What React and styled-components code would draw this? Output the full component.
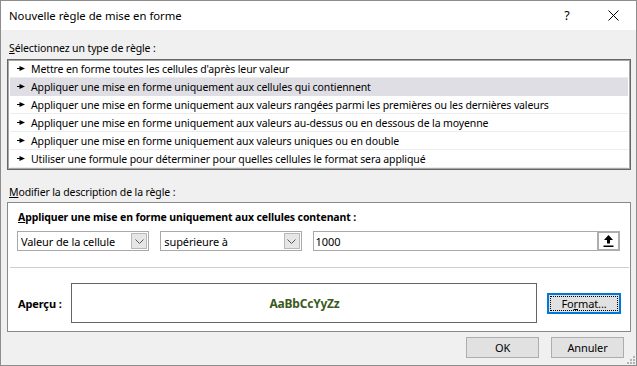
import React from "react";
import styled, { createGlobalStyle } from "styled-components";

const Global = createGlobalStyle`
  html, body { margin: 0; padding: 0; background: #f0f0f0; }
  body { font-family: "Noto Sans", "Lato", sans-serif; font-size: 10.5px; letter-spacing: -0.12px; color: #000; }
  * { box-sizing: border-box; }
`;

const Dialog = styled.div`
  width: 637px;
  height: 366px;
  border: 1px solid #8d8d8d;
  background: #f0f0f0;
  display: flex;
  flex-direction: column;
  position: relative;
  overflow: hidden;
`;

const TitleBar = styled.div`
  height: 29px;
  background: #fff;
  display: flex;
  align-items: center;
  padding-left: 8px;
  flex-shrink: 0;
`;

const Title = styled.div`
  flex: 1;
  font-size: 11.3px;
  letter-spacing: 0;
`;

const TitleButton = styled.div`
  width: ${(p) => p.$w}px;
  height: 29px;
  display: flex;
  align-items: center;
  justify-content: center;
  font-size: 12.5px;
`;

const Body = styled.div`
  flex: 1;
  display: flex;
  flex-direction: column;
  padding: 0 6px;
`;

const SectionLabel = styled.div`
  height: 16px;
  line-height: 16px;
  margin-top: ${(p) => p.$mt}px;
  padding-left: 2px;
`;

const ListBox = styled.div`
  margin-top: 3px;
  width: 624px;
  border: 1px solid #666;
  box-shadow: inset 0 0 0 1px #a8a8a8;
  background: #fff;
  padding: 0 2px 1px 2px;
  display: flex;
  flex-direction: column;
`;

const ListItem = styled.div`
  height: 18px;
  display: flex;
  align-items: center;
  padding-left: 7px;
  gap: 6px;
  background: ${(p) => (p.$selected ? "#dedee4" : "transparent")};
  border-bottom: 1px solid ${(p) => (p.$selected ? "#dedee4" : "#ececec")};
  white-space: nowrap;
`;

const Panel = styled.div`
  margin-top: 2px;
  width: 624px;
  height: 130px;
  border: 1px solid #8a8a8a;
  background: #fff;
  display: flex;
  flex-direction: column;
`;

const ConditionSection = styled.div`
  padding: 6px 9px 0 7px;
  height: 65px;
  border-bottom: 1px solid #cfcfcf;
  margin: 0 1px 0 2px;
`;

const Heading = styled.div`
  font-weight: bold;
  height: 16px;
  line-height: 16px;
  padding-left: 1px;
`;

const ControlRow = styled.div`
  margin-top: 6px;
  display: flex;
  gap: 11px;
`;

const Combo = styled.div`
  width: ${(p) => p.$w}px;
  height: 20px;
  border: 1px solid #a9a9a9;
  background: #fff;
  display: flex;
  align-items: center;
  padding: 0 1px 0 3px;
`;

const ComboText = styled.div`
  flex: 1;
  white-space: nowrap;
  font-size: 11px;
`;

const DropButton = styled.div`
  width: 16px;
  height: 16px;
  border: 1px solid #b8b8b8;
  background: #e6e6e6;
  display: flex;
  align-items: center;
  justify-content: center;
`;

const ValueInput = styled.div`
  width: 309px;
  height: 20px;
  border: 1px solid #a9a9a9;
  background: #fff;
  display: flex;
  align-items: center;
  padding: 0 0 0 2px;
`;

const RefButton = styled.div`
  width: 23px;
  height: 20px;
  margin-right: -1px;
  border: 2px solid #adadad;
  background: #fdfdfd;
  display: flex;
  align-items: center;
  justify-content: center;
`;

const PreviewSection = styled.div`
  display: flex;
  align-items: center;
  padding: 15px 0 0 10px;
`;

const PreviewLabel = styled.div`
  width: 53px;
  font-weight: bold;
  font-size: 11px;
`;

const PreviewBox = styled.div`
  width: 466px;
  height: 40px;
  border: 1px solid #646464;
  display: flex;
  align-items: center;
  justify-content: center;
  font-weight: bold;
  color: #3b5a1e;
  font-size: 12px;
  letter-spacing: -0.2px;
  padding-left: 1px;
`;

const FormatButton = styled.div`
  margin-left: 10px;
  width: 74px;
  height: 21px;
  border: 2px solid #0078d7;
  background: #e1e1e1;
  display: flex;
  align-items: center;
  justify-content: center;
  padding: 1px;
`;

const FocusRect = styled.div`
  width: 100%;
  height: 100%;
  border: 1px dotted #000;
  display: flex;
  align-items: center;
  justify-content: center;
  font-size: 11px;
`;

const Footer = styled.div`
  display: flex;
  justify-content: flex-end;
  gap: 12px;
  margin-top: 5px;
  padding-right: 6px;
`;

const DialogButton = styled.div`
  width: 73px;
  height: 21px;
  border: 1px solid #adadad;
  background: #e1e1e1;
  display: flex;
  align-items: center;
  justify-content: center;
  font-size: 11px;
`;

const Grip = styled.svg`
  position: absolute;
  right: 1px;
  bottom: 1px;
`;

const Arrow = () => (
  <svg width="8" height="5" viewBox="0 0 8 5">
    <rect x="0" y="2" width="3" height="1" fill="#000" />
    <polygon points="2.5,0 8,2.5 2.5,5" fill="#000" />
  </svg>
);

const Chevron = () => (
  <svg width="9" height="5" viewBox="0 0 9 5">
    <polyline points="0.5,0.5 4.5,4.5 8.5,0.5" fill="none" stroke="#555" strokeWidth="1" />
  </svg>
);

const UploadIcon = () => (
  <svg width="11" height="12" viewBox="0 0 11 12">
    <polygon points="5.5,0 10,5 7,5 7,8.5 4,8.5 4,5 1,5" fill="#000" />
    <rect x="0.5" y="10.5" width="10" height="1.5" fill="#000" />
  </svg>
);

const rules = [
  "Mettre en forme toutes les cellules d'après leur valeur",
  "Appliquer une mise en forme uniquement aux cellules qui contiennent",
  "Appliquer une mise en forme uniquement aux valeurs rangées parmi les premières ou les dernières valeurs",
  "Appliquer une mise en forme uniquement aux valeurs au-dessus ou en dessous de la moyenne",
  "Appliquer une mise en forme uniquement aux valeurs uniques ou en double",
  "Utiliser une formule pour déterminer pour quelles cellules le format sera appliqué",
];

export default function App() {
  return (
    <>
      <Global />
      <Dialog>
        <TitleBar>
          <Title>Nouvelle règle de mise en forme</Title>
          <TitleButton $w={46}>?</TitleButton>
          <TitleButton $w={46}>
            <svg width="11" height="11" viewBox="0 0 11 11">
              <path d="M0.5 0.5 L10.5 10.5 M10.5 0.5 L0.5 10.5" stroke="#000" strokeWidth="1" />
            </svg>
          </TitleButton>
        </TitleBar>
        <Body>
          <SectionLabel $mt={10}>
            <u>S</u>électionnez un type de règle :
          </SectionLabel>
          <ListBox>
            {rules.map((r, i) => (
              <ListItem key={i} $selected={i === 1}>
                <Arrow />
                <span>{r}</span>
              </ListItem>
            ))}
          </ListBox>
          <SectionLabel $mt={14}>
            <u>M</u>odifier la description de la règle :
          </SectionLabel>
          <Panel>
            <ConditionSection>
              <Heading>
                <u>A</u>ppliquer une mise en forme uniquement aux cellules contenant :
              </Heading>
              <ControlRow>
                <Combo $w={133}>
                  <ComboText>Valeur de la cellule</ComboText>
                  <DropButton>
                    <Chevron />
                  </DropButton>
                </Combo>
                <Combo $w={142}>
                  <ComboText>supérieure à</ComboText>
                  <DropButton>
                    <Chevron />
                  </DropButton>
                </Combo>
                <ValueInput>
                  <ComboText>1000</ComboText>
                  <RefButton>
                    <UploadIcon />
                  </RefButton>
                </ValueInput>
              </ControlRow>
            </ConditionSection>
            <PreviewSection>
              <PreviewLabel>Aperçu :</PreviewLabel>
              <PreviewBox>AaBbCcYyZz</PreviewBox>
              <FormatButton>
                <FocusRect>
                  Fo<u>r</u>mat...
                </FocusRect>
              </FormatButton>
            </PreviewSection>
          </Panel>
          <Footer>
            <DialogButton>OK</DialogButton>
            <DialogButton>Annuler</DialogButton>
          </Footer>
        </Body>
        <Grip width="8" height="8" viewBox="0 0 8 8">
          {[
            [6, 0],
            [6, 3],
            [3, 3],
            [6, 6],
            [3, 6],
            [0, 6],
          ].map(([x, y], i) => (
            <rect key={i} x={x} y={y} width="2" height="2" fill="#b5b5b5" />
          ))}
        </Grip>
      </Dialog>
    </>
  );
}
